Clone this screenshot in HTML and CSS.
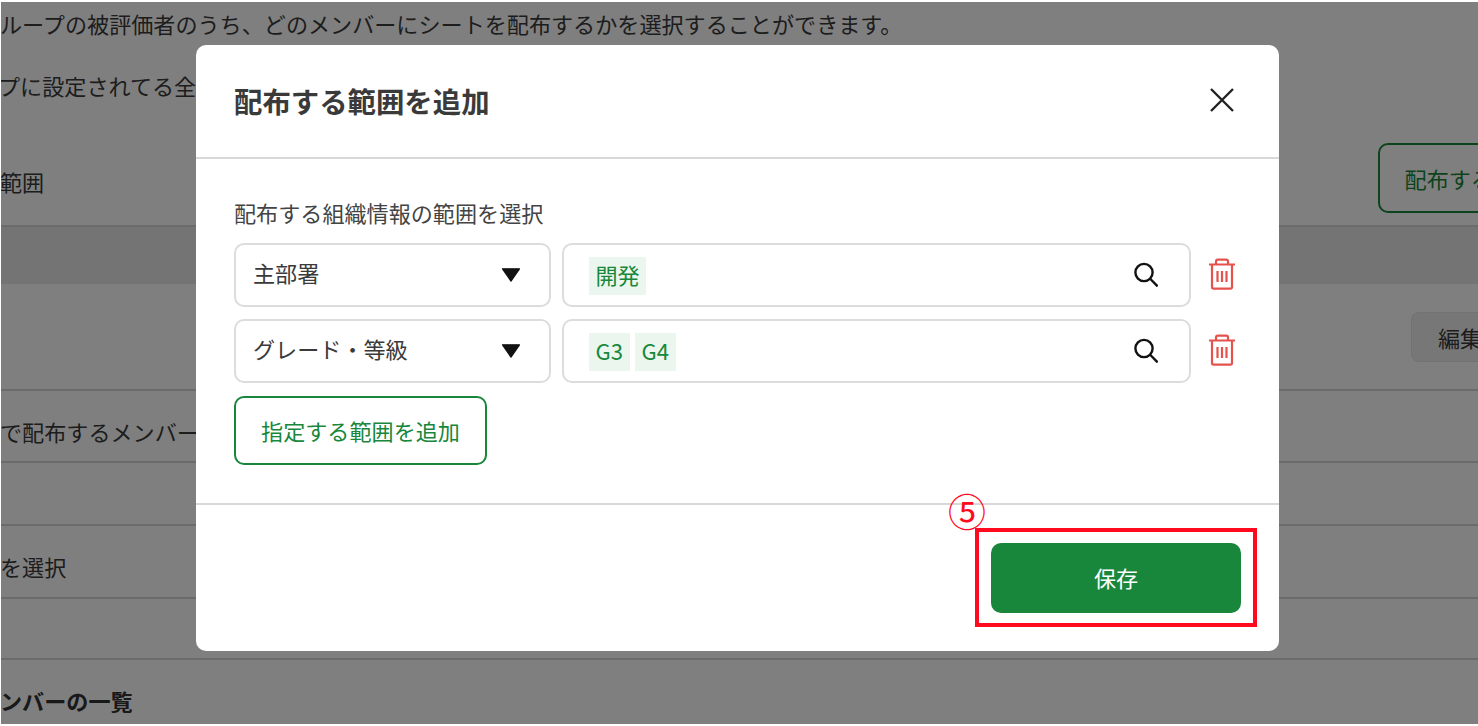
FILE: index.html
```html
<!DOCTYPE html>
<html lang="ja">
<head>
<meta charset="utf-8">
<title>配布する範囲を追加</title>
<link rel="stylesheet" href="styles.css">
</head>
<body>
<div class="stage">
  <main class="page">
    <p class="lead lead-one">ループの被評価者のうち、どのメンバーにシートを配布するかを選択することができます。</p>
    <p class="lead lead-two">プに設定されてる全</p>
    <div class="row row-head">
      <span>範囲</span>
      <button class="outline-dim">配布する範囲を追加</button>
    </div>
    <div class="band"></div>
    <div class="row row-edit"><span></span><button class="edit">編集</button></div>
    <div class="row row-member"><span>で配布するメンバー</span></div>
    <div class="row row-empty-a"></div>
    <div class="row row-select"><span>を選択</span></div>
    <div class="row row-empty-b"></div>
    <h2 class="list-title">ンバーの一覧</h2>
  </main>
  <div class="overlay"></div>

  <section class="modal">
    <header class="modal-head">
      <h1>配布する範囲を追加</h1>
      <svg class="close" viewBox="0 0 24 24" width="24" height="24"><path d="M1 1 23 23M23 1 1 23"/></svg>
    </header>
    <div class="modal-body">
      <div class="field-label">配布する組織情報の範囲を選択</div>
      <div class="range-row">
        <div class="select"><span>主部署</span>
          <svg class="caret" viewBox="0 0 20 14" width="20" height="14"><path d="M1.5 0.8H18.5L10 13.2Z"/></svg>
        </div>
        <div class="value">
          <span class="tag">開発</span>
          <svg class="search" viewBox="0 0 24 25" width="24" height="25"><circle cx="10" cy="10.5" r="8.6"/><path d="M16.4 17 23.6 24.4"/></svg>
        </div>
        <svg class="trash" viewBox="0 0 28 32" width="28" height="32"><path d="M1 6.5H27M8 6.5V3.4Q8 1.6 9.8 1.6H18.2Q20 1.6 20 3.4V6.5M4 6.5V29Q4 30.6 5.6 30.6H22.4Q24 30.6 24 29V6.5M9.5 13V24M14 13V24M18.500 13V24"/></svg>
      </div>
      <div class="range-row">
        <div class="select"><span>グレード・等級</span>
          <svg class="caret" viewBox="0 0 20 14" width="20" height="14"><path d="M1.5 0.8H18.5L10 13.2Z"/></svg>
        </div>
        <div class="value">
          <span class="tag">G3</span><span class="tag">G4</span>
          <svg class="search" viewBox="0 0 24 25" width="24" height="25"><circle cx="10" cy="10.5" r="8.6"/><path d="M16.4 17 23.6 24.4"/></svg>
        </div>
        <svg class="trash" viewBox="0 0 28 32" width="28" height="32"><path d="M1 6.5H27M8 6.5V3.4Q8 1.6 9.8 1.6H18.2Q20 1.6 20 3.4V6.5M4 6.5V29Q4 30.6 5.6 30.6H22.4Q24 30.6 24 29V6.5M9.5 13V24M14 13V24M18.500 13V24"/></svg>
      </div>
      <button class="add">指定する範囲を追加</button>
    </div>
    <footer class="modal-foot">
      <button class="save">保存</button>
    </footer>
  </section>

  <div class="callout"></div>
  <span class="callout-num">⑤</span>
</div>
</body>
</html>
```

FILE: styles.css
```css
* { box-sizing: border-box; }
html, body { margin: 0; height: 726px; overflow: hidden; background: #fff; }
body { font-family: "Noto Sans CJK JP", "Noto Sans", sans-serif; font-size: 22.1px; color: #3a3a3a; }
button { font: inherit; cursor: pointer; }

.stage { position: relative; width: 1478px; height: 726px; overflow: hidden; }
.page { width: 1627px; height: 722px; margin: 2px 0 0 1px; overflow: hidden; }
.overlay { position: absolute; left: 1px; top: 2px; right: 0; height: 722px; background: rgba(0, 0, 0, 0.5); }

.lead { margin: 0; line-height: 32px; white-space: nowrap; }
.lead-one { padding-top: 5px; height: 54px; margin-left: -1px; }
.lead-two { height: 53px; padding-top: 13px; margin-left: -3px; }

.row { display: flex; justify-content: space-between; align-items: center; border-bottom: 2px solid #d6d6d6; line-height: 32px; }
.row-head { height: 118px; }
.row-head span { margin-left: -1px; margin-top: 28px; }
.outline-dim { width: 250px; height: 70px; margin-top: 22px; background: #fff; border: 2px solid #18873b; border-radius: 10px; color: #18873b; padding: 0 0 0 2px; }
.band { height: 57px; background: #e8e8e8; }
.row-edit { height: 107px; padding-right: 121px; }
.edit { width: 96px; height: 50px; padding: 0 0 0 2px; background: #eee; border: 1px solid #e4e4e4; border-radius: 8px; color: #3a3a3a; }
.row-member { height: 72px; }
.row-member span { margin-left: -1px; margin-top: 10px; }
.row-select span { margin-left: -1px; margin-top: 8px; }
.row-empty-a { height: 63px; }
.row-select { height: 73px; }
.row-empty-b { height: 61px; }
.list-title { margin: 0 0 0 -1px; padding-top: 24px; font-size: 22.1px; line-height: 32px; font-weight: 700; white-space: nowrap; color: #333; }

.modal { position: absolute; left: 196px; top: 45px; width: 1083px; height: 606px; background: #fff; border-radius: 10px; display: flex; flex-direction: column; }
.modal-head { height: 114px; flex: none; display: flex; justify-content: space-between; align-items: center; padding: 0 45px 0 38px; border-bottom: 2px solid #d8d8d8; }
.modal-head h1 { margin: 0; font-size: 28.4px; line-height: 40px; font-weight: 700; color: #3a3a3a; }
.close { fill: none; stroke: #222; stroke-width: 2.4; margin-top: -2px; }

.modal-body { flex: 1; padding: 36px 38px 0; }
.field-label { line-height: 34px; height: 48px; color: #444; }
.range-row { display: flex; align-items: center; margin-bottom: 12px; height: 64px; }
.select { width: 317px; height: 64px; flex: none; display: flex; justify-content: space-between; align-items: center; padding: 0 28px 0 17px; border: 2px solid #dcdcdc; border-radius: 10px; }
.select span { margin-top: -6px; }
.caret { fill: #111; stroke: #111; stroke-width: 1.2; stroke-linejoin: round; }
.value { width: 629px; height: 64px; flex: none; margin-left: 11px; display: flex; align-items: center; gap: 5.500px; padding: 0 31px 0 25px; border: 2px solid #dcdcdc; border-radius: 10px; }
.tag { height: 38px; line-height: 34px; padding: 0 6.500px; background: #ebf7ee; color: #18873b; margin-top: 1px; }
.search { fill: none; stroke: #111; stroke-width: 2.4; margin-left: auto; margin-top: -1px; }
.trash { fill: none; stroke: #e5524c; stroke-width: 2.2; margin-left: 17px; margin-top: -2px; }
.add { display: block; width: 253px; height: 69px; margin-top: 13px; padding: 0 0 2px; background: #fff; border: 2px solid #18873b; border-radius: 10px; color: #18873b; }

.modal-foot { height: 148px; flex: none; border-top: 2px solid #d8d8d8; display: flex; justify-content: flex-end; align-items: flex-start; padding: 38px 38px 0 0; }
.save { width: 250px; height: 70px; padding: 0 0 3px; background: #18873b; border: none; border-radius: 10px; color: #fff; }

.callout { position: absolute; left: 975px; top: 528px; width: 282px; height: 99px; border: 4px solid #ff0a1e; }
.callout-num { position: absolute; left: 947px; top: 488px; width: 40px; text-align: center; font-family: "Noto Sans CJK JP", sans-serif; font-size: 38px; line-height: 44px; color: #ff0a1e; }
```
